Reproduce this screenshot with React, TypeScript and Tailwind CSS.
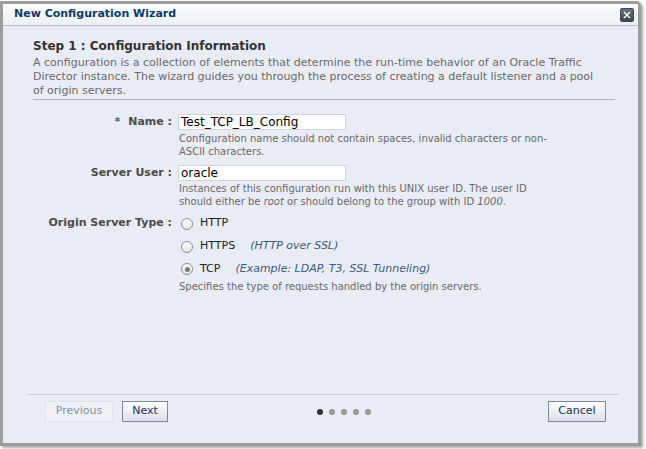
import React from "react";

function Radio({ checked }: { checked?: boolean }) {
    return (
        <span className="flex h-[12px] w-[12px] shrink-0 items-center justify-center rounded-full border border-[#8f8f8f] bg-gradient-to-b from-white to-[#e4e4e4]">
            {checked && <span className="h-[5px] w-[5px] rounded-full bg-[#7a7a7a]" />}
        </span>
    );
}

function Dots() {
    return (
        <div className="flex items-center gap-[6px]">
            <span className="h-[6px] w-[6px] rounded-full bg-[#333]" />
            <span className="h-[6px] w-[6px] rounded-full bg-[#9a9a9a]" />
            <span className="h-[6px] w-[6px] rounded-full bg-[#9a9a9a]" />
            <span className="h-[6px] w-[6px] rounded-full bg-[#9a9a9a]" />
            <span className="h-[6px] w-[6px] rounded-full bg-[#9a9a9a]" />
        </div>
    );
}

export default function App() {
    return (
        <div className="h-[449px] w-[646px] overflow-hidden bg-white pt-[1px] font-['DejaVu_Sans',sans-serif]">
            <div className="flex h-[445px] w-[641px] flex-col rounded-tr-[5px] border-[3px] border-[#9c9c9c] bg-[#e9ecf4] shadow-[2px_2px_3px_rgba(0,0,0,0.35)]">
                {/* title bar */}
                <div className="flex h-[22px] shrink-0 items-center justify-between border-b border-[#b7bdc9] bg-gradient-to-b from-[#fcfdfe] to-[#eceff5] pl-[11px] pr-[4px]">
                    <span className="text-[11px] font-bold text-[#0d3a66]">New Configuration Wizard</span>
                    <span className="flex h-[14px] w-[14px] items-center justify-center rounded-[2px] border border-[#3d4350] bg-gradient-to-b from-[#6b7383] to-[#3e4552]">
                        <svg width="8" height="8" viewBox="0 0 8 8">
                            <path d="M1 1 L7 7 M7 1 L1 7" stroke="white" strokeWidth="1.4" />
                        </svg>
                    </span>
                </div>

                <div className="flex flex-1 flex-col">
                    <div className="pl-[30px] pr-[23px] pt-[12px]">
                        <h2 className="text-[12px] font-bold leading-[16px] text-[#333]">Step 1 : Configuration Information</h2>
                        <p className="mt-[2px] whitespace-nowrap border-b border-[#adb3bd] pb-[1px] text-[11px] leading-[14px] text-[#6a6a6a]">
                            A configuration is a collection of elements that determine the run-time behavior of an Oracle Traffic
                            <br />
                            Director instance. The wizard guides you through the process of creating a default listener and a pool
                            <br />
                            of origin servers.
                        </p>
                    </div>

                    {/* form */}
                    <div className="mt-[14px] grid grid-cols-[169px_1fr] gap-x-[6px] text-[11px]">
                        <div className="flex h-[16px] items-center justify-end font-bold text-[#4b4b4b]">
                            <span className="mr-[8px] text-[#356ba8]">*</span>Name :
                        </div>
                        <div>
                            <div className="flex h-[16px] w-[168px] items-center border border-[#cfd3da] bg-white px-[2px] text-[12px] text-black">
                                Test_TCP_LB_Config
                            </div>
                            <p className="mt-[2px] w-[380px] pl-[1px] text-[10px] leading-[13px] text-[#6a6a6a]">
                                Configuration name should not contain spaces, invalid characters or non-ASCII characters.
                            </p>
                        </div>

                        <div className="mt-[7px] flex h-[16px] items-center justify-end font-bold text-[#4b4b4b]">Server User :</div>
                        <div className="mt-[7px]">
                            <div className="flex h-[16px] w-[168px] items-center border border-[#cfd3da] bg-white px-[2px] text-[12px] text-black">
                                oracle
                            </div>
                            <p className="mt-[1px] w-[370px] pl-[1px] text-[10px] leading-[13px] text-[#6a6a6a]">
                                Instances of this configuration run with this UNIX user ID. The user ID
                                <br />
                                should either be <i>root</i> or should belong to the group with ID <i>1000</i>.
                            </p>
                        </div>

                        <div className="mt-[4px] flex h-[23px] items-center justify-end font-bold text-[#4b4b4b]">Origin Server Type :</div>
                        <div className="mt-[4px] pl-[3px]">
                            <div className="flex h-[23px] items-center gap-[7px] text-[#222]">
                                <Radio />
                                <span>HTTP</span>
                            </div>
                            <div className="flex h-[23px] items-center gap-[7px] text-[#222]">
                                <Radio />
                                <span>HTTPS</span>
                                <span className="ml-[8px] italic text-[#3f5a7e]">(HTTP over SSL)</span>
                            </div>
                            <div className="flex h-[22px] items-center gap-[7px] text-[#222]">
                                <Radio checked />
                                <span>TCP</span>
                                <span className="ml-[8px] italic text-[#3f5a7e]">(Example: LDAP, T3, SSL Tunneling)</span>
                            </div>
                            <p className="-ml-[2px] text-[10px] leading-[13px] text-[#6a6a6a]">
                                Specifies the type of requests handled by the origin servers.
                            </p>
                        </div>
                    </div>

                    <div className="flex-1" />

                    {/* footer */}
                    <div className="ml-[25px] mr-[19px] border-t border-[#c3c8d1]" />
                    <div className="flex h-[48px] items-start pl-[42px] pr-[32px] pt-[6px] text-[11px]">
                        <button className="h-[21px] w-[68px] border border-[#dfe3ea] bg-[#eff1f6] text-[#8691a6]">Previous</button>
                        <button className="ml-[9px] h-[21px] w-[46px] border border-[#7f8898] bg-gradient-to-b from-white to-[#d9dee8] text-[#1b3152]">
                            Next
                        </button>
                        <div className="ml-[149px] flex h-[21px] items-center">
                            <Dots />
                        </div>
                        <div className="flex-1" />
                        <button className="h-[21px] w-[58px] border border-[#7f8898] bg-gradient-to-b from-white to-[#d9dee8] text-[#1b3152]">
                            Cancel
                        </button>
                    </div>
                </div>
            </div>
        </div>
    );
}
